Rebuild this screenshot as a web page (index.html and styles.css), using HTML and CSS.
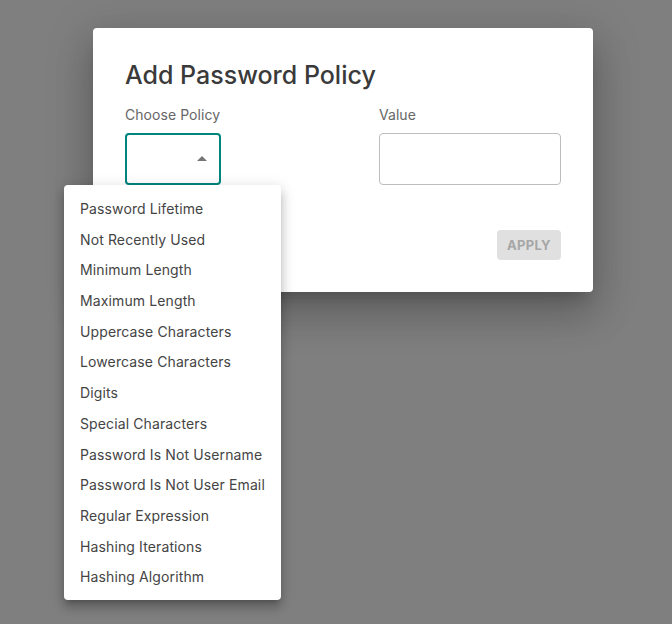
FILE: index.html
```html
<!DOCTYPE html>
<html>
<head>
<meta charset="utf-8">
<link rel="stylesheet" href="styles.css">
</head>
<body>
<div class="dialog">
  <h1 class="title">Add Password Policy</h1>
  <div class="fields">
    <div class="field">
      <label class="label">Choose Policy</label>
      <div class="select-wrap">
        <div class="select">
          <svg class="arrow" width="10" height="5" viewBox="0 0 10 5"><path d="M0 5 L5 0 L10 5 Z" fill="#757575"/></svg>
        </div>
        <ul class="menu">
          <li>Password Lifetime</li>
          <li>Not Recently Used</li>
          <li>Minimum Length</li>
          <li>Maximum Length</li>
          <li>Uppercase Characters</li>
          <li>Lowercase Characters</li>
          <li>Digits</li>
          <li>Special Characters</li>
          <li>Password Is Not Username</li>
          <li>Password Is Not User Email</li>
          <li>Regular Expression</li>
          <li>Hashing Iterations</li>
          <li>Hashing Algorithm</li>
        </ul>
      </div>
    </div>
    <div class="field">
      <label class="label">Value</label>
      <div class="input"></div>
    </div>
  </div>
  <div class="actions">
    <button class="btn">APPLY</button>
  </div>
</div>
</body>
</html>
```
FILE: styles.css
```css
html, body {
  margin: 0;
  height: 100%;
}
body {
  background: #7f7f7f;
  font-family: Inter, "Noto Sans", sans-serif;
  padding: 28px 0 0 93px;
  box-sizing: border-box;
}
.dialog {
  width: 500px;
  box-sizing: border-box;
  background: #fff;
  border-radius: 4px;
  padding: 32px;
  box-shadow: 0 11px 15px -7px rgba(0,0,0,0.2), 0 24px 38px 3px rgba(0,0,0,0.14), 0 9px 46px 8px rgba(0,0,0,0.12);
}
.title {
  margin: 0 0 15px;
  font-size: 25px;
  line-height: 30px;
  font-weight: 500;
  color: #3a3a3a;
}
.fields {
  display: grid;
  grid-template-columns: 218px 182px;
  column-gap: 36px;
}
.field {
  display: flex;
  flex-direction: column;
  gap: 8px;
}
.label {
  font-size: 14px;
  line-height: 20px;
  color: #666;
  letter-spacing: 0.05px;
}
.select-wrap {
  position: relative;
}
.select {
  width: 96px;
  height: 52px;
  box-sizing: border-box;
  border: 2px solid #00857e;
  border-radius: 4px;
  display: flex;
  align-items: center;
  justify-content: flex-end;
  padding-right: 12px;
}
.arrow {
  display: block;
  margin-top: -1px;
}
.input {
  height: 52px;
  box-sizing: border-box;
  border: 1px solid #bdbdbd;
  border-radius: 4px;
}
.menu {
  position: absolute;
  top: 52px;
  left: -61px;
  width: 217px;
  margin: 0;
  padding: 9px 0 7px;
  list-style: none;
  background: #fff;
  border-radius: 4px;
  box-shadow: 0 5px 5px -3px rgba(0,0,0,0.2), 0 8px 10px 1px rgba(0,0,0,0.14), 0 3px 14px 2px rgba(0,0,0,0.12);
  z-index: 2;
}
.menu li {
  padding: 0 16px;
  height: 30.7px;
  line-height: 30.7px;
  font-size: 14px;
  letter-spacing: 0.12px;
  color: #444;
  white-space: nowrap;
}
.actions {
  display: flex;
  justify-content: flex-end;
  margin-top: 45px;
}
.btn {
  width: 64px;
  height: 30px;
  border: none;
  border-radius: 4px;
  background: #e0e0e0;
  color: #a6a6a6;
  font-family: Inter, "Noto Sans", sans-serif;
  font-size: 13px;
  font-weight: 700;
  letter-spacing: 0.3px;
  padding: 0;
}
```
